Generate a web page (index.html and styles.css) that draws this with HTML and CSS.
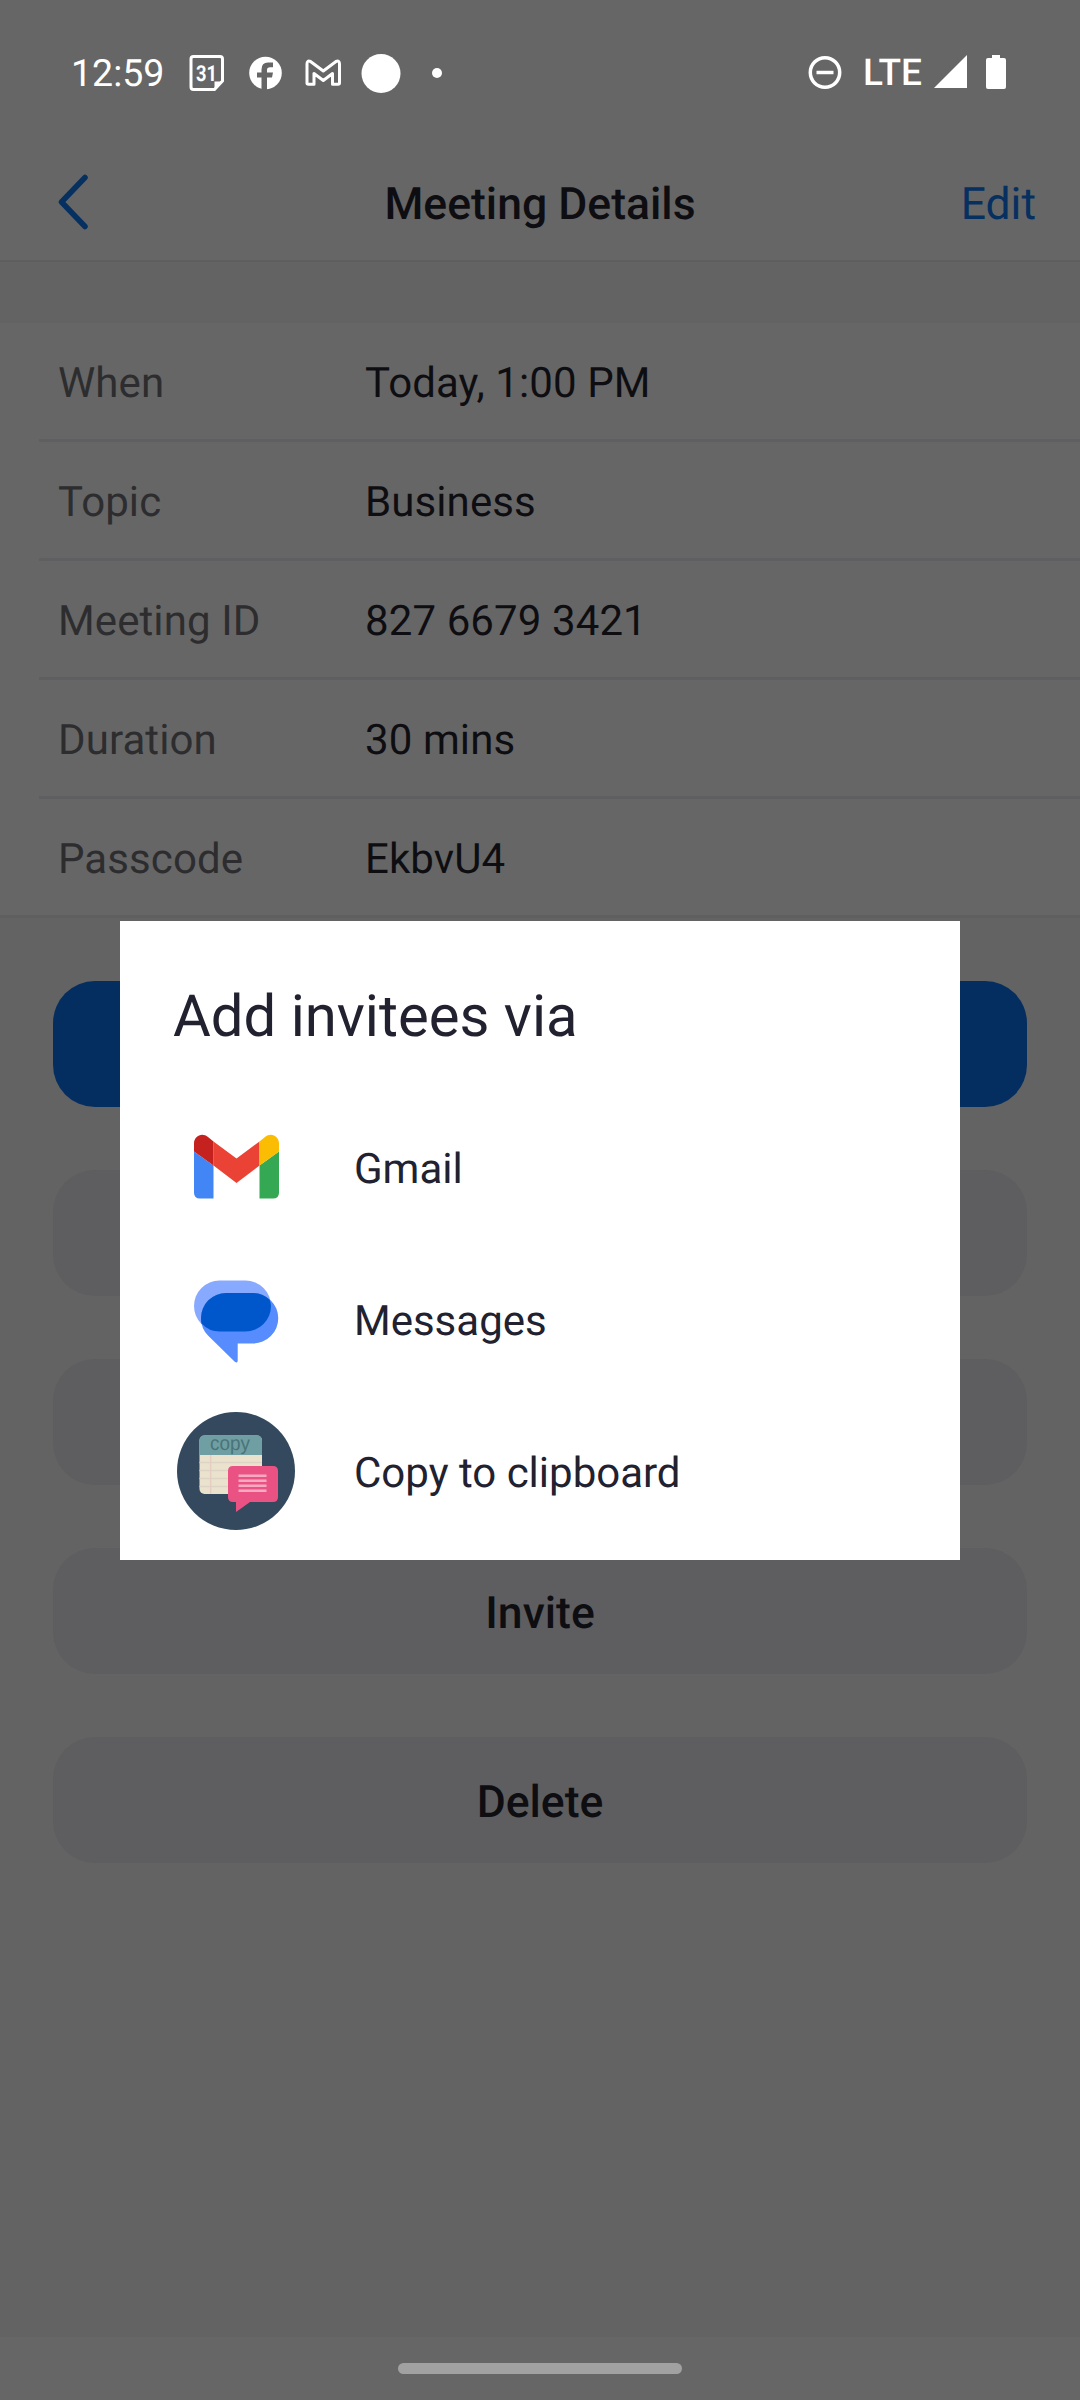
FILE: index.html
```html
<!DOCTYPE html>
<html lang="en">
<head>
<meta charset="utf-8">
<title>Meeting Details</title>
<link rel="stylesheet" href="styles.css">
</head>
<body>
<div class="screen">
  <div class="status-bar">
    <span class="clock">12:59</span>
    <svg class="status-left" width="256" height="40" viewBox="0 0 256 40">
      <path d="M4.500 2.500H31Q33.500 2.500 33.500 5V27L25.500 35.500H4.500Q2 35.500 2 33V5Q2 2.500 4.500 2.500Z" fill="none" stroke="#fff" stroke-width="3"/>
      <path d="M25.500 35V27.500H34Z" fill="#fff"/>
      <text class="calendar-day" x="17.500" y="26.500" text-anchor="middle" textLength="21" lengthAdjust="spacingAndGlyphs">31</text>
      <circle cx="76.500" cy="19" r="16.300" fill="#fff"/>
      <path d="M72.500 36V23.500H68V18.500H72.500V15.500Q72.500 8.500 79 8.500H84V13.200H81Q78 13.200 78 16V18.500H84L83 23.500H78V36Z" fill="#666"/>
      <path d="M118 29V10Q118 6 121.500 7.500L134.300 17L147 7.500Q150.500 6 150.500 10V29Q150.500 30.300 149 30.300H143.500V19.500L134.300 26.500L125 19.500V30.300H119.500Q118 30.300 118 29Z" fill="none" stroke="#fff" stroke-width="3" stroke-linejoin="round"/>
      <circle cx="192" cy="19.500" r="19.500" fill="#fff"/>
      <circle cx="248" cy="19" r="5" fill="#fff"/>
    </svg>
    <div class="status-right">
      <svg width="34" height="34" viewBox="0 0 34 34"><circle cx="17" cy="17.500" r="14.700" fill="none" stroke="#fff" stroke-width="3.500"/><path d="M8.500 17.500H25.500" stroke="#fff" stroke-width="3.500"/></svg>
      <span class="network">LTE</span>
      <svg class="signal" width="33" height="34" viewBox="0 0 33 34"><path d="M0 33L33 0V33Z" fill="#fff"/></svg>
      <svg class="battery" width="20" height="34" viewBox="0 0 20 34"><path d="M6 0H14V3H18Q20 3 20 5V32Q20 34 18 34H2Q0 34 0 32V5Q0 3 2 3H6Z" fill="#fff"/></svg>
    </div>
  </div>
  <header class="header">
    <svg class="back" width="32" height="56" viewBox="0 0 32 56"><path d="M28 3.500L4.500 28L28 52.500" fill="none" stroke="#053060" stroke-width="5.500" stroke-linecap="round" stroke-linejoin="round"/></svg>
    <h1 class="title">Meeting Details</h1>
    <span class="edit">Edit</span>
  </header>
  <dl class="details">
    <div class="row"><dt>When</dt><dd>Today, 1:00 PM</dd></div>
    <div class="row"><dt>Topic</dt><dd>Business</dd></div>
    <div class="row"><dt>Meeting ID</dt><dd>827 6679 3421</dd></div>
    <div class="row"><dt>Duration</dt><dd>30 mins</dd></div>
    <div class="row"><dt>Passcode</dt><dd>EkbvU4</dd></div>
  </dl>
  <div class="actions">
    <div class="button primary"></div>
    <div class="button"></div>
    <div class="button"></div>
    <div class="button">Invite</div>
    <div class="button">Delete</div>
  </div>
  <div class="nav-bar"><div class="handle"></div></div>

  <div class="dialog">
    <h2 class="dialog-title">Add invitees via</h2>
    <div class="option">
      <svg class="option-icon" width="120" height="120" viewBox="0 -3.500 120 120">
        <path d="M18 41L37.500 55V88H24Q18 88 18 82Z" fill="#4285f4"/>
        <path d="M83.500 55L103 41V82Q103 88 97 88H83.500Z" fill="#34a853"/>
        <path d="M37.500 31L60.500 48L83.500 31V55L60.500 72.500L37.500 55Z" fill="#ea4335"/>
        <path d="M18 41V33C18 25.500 26 21.500 32 26.500L37.500 31V55Z" fill="#c5221f"/>
        <path d="M103 41V33C103 25.500 95 21.500 89 26.500L83.500 31V55Z" fill="#fbbc04"/>
      </svg>
      <span>Gmail</span>
    </div>
    <div class="option">
      <svg class="option-icon" width="120" height="120" viewBox="0 -3.500 120 120">
        <rect x="18" y="18" width="77" height="51" rx="25.500" fill="#87a9ff"/>
        <path d="M50 30.500H77A25.200 25.200 0 0 1 77 81H61.700V98Q61.700 101.500 58.500 99L32 73Q25 66 25 55.500A25 25 0 0 1 50 30.500Z" fill="#578cff"/>
        <path d="M50 30.500H77Q86 30.500 93.500 37Q95 41 95 43.500A25.500 25.500 0 0 1 69.500 69H43.500Q33 69 25.500 61Q25 59 25 55.500A25 25 0 0 1 50 30.500Z" fill="#0057cc"/>
      </svg>
      <span>Messages</span>
    </div>
    <div class="option">
      <svg class="option-icon" width="120" height="120" viewBox="0 0 120 120">
        <circle cx="60" cy="60" r="59" fill="#34495e"/>
        <rect x="23.500" y="24.500" width="62.500" height="58.500" rx="5" fill="#ebe2cd"/>
        <path d="M23.500 44V29.500Q23.500 24.500 28.500 24.500H81Q86 24.500 86 29.500V44Z" fill="#6f9fa3"/>
        <path d="M23.500 51.500H86M23.500 59.500H86M23.500 67.500H86M23.500 75.500H86" stroke="#ded4c5" stroke-width="1.500"/>
        <path d="M34.700 44V83" stroke="#e6cdc4" stroke-width="1.500"/>
        <text class="copy-label" x="54" y="38.500" text-anchor="middle" textLength="40" lengthAdjust="spacingAndGlyphs">copy</text>
        <path d="M57 55H97Q102 55 102 60V86Q102 91 97 91H74L60 101V91H57Q52 91 52 86V60Q52 55 57 55Z" fill="#ea5284"/>
        <path d="M62.500 64.700H90.500M62.500 69.700H90.500M62.500 74.700H90.500M62.500 79.700H90.500" stroke="#f7a9c2" stroke-width="2.500"/>
      </svg>
      <span>Copy to clipboard</span>
    </div>
  </div>
</div>
</body>
</html>
```
FILE: styles.css
```css
* { box-sizing: border-box; }

body {
  margin: 0;
  font-family: Roboto, sans-serif;
  background: #646464;
  text-rendering: geometricPrecision;
}

.screen {
  position: relative;
  display: flex;
  flex-direction: column;
  width: 1080px;
  height: 2400px;
  overflow: hidden;
  background: #636363;
  color: #0e0e12;
  font-size: 42px;
}

.status-bar {
  display: flex;
  align-items: center;
  height: 144px;
  padding: 0 74px 0 71px;
  background: #666;
  color: #fff;
}

.clock { width: 118px; font-size: 37.500px; line-height: 44px; padding-top: 4px; }
.status-left { margin-top: 4px; }
.calendar-day { font: 700 22px Roboto, sans-serif; fill: #fff; }
.status-right { display: flex; align-items: center; margin-left: auto; }
.network { margin: 0 12px 0 21px; padding-top: 4px; font-size: 37px; font-weight: 500; line-height: 44px; }
.battery { margin-left: 19px; }

.header {
  display: grid;
  grid-template-columns: 1fr auto 1fr;
  align-items: center;
  height: 118px;
  padding: 0 44px 0 58px;
  background: #666;
  border-bottom: 2px solid #5e5e5e;
}

.back { margin-left: -1px; }
.title { margin: 0 14px 0 0; padding-top: 3px; font-size: 44.500px; line-height: 52px; font-weight: 500; }
.edit { justify-self: end; padding-top: 3px; color: #053060; font-size: 44.500px; line-height: 52px; }

.details {
  margin: 61px 0 0;
  background: #666;
  border-bottom: 3px solid #5f5f5f;
}

.row {
  display: flex;
  align-items: center;
  height: 119px;
  margin-left: 39px;
  padding: 4px 0 0 19px;
  border-bottom: 3px solid #5f5f61;
  letter-spacing: 0.1px;
}

.row:last-child { height: 116px; border-bottom: 0; }
.row dt { width: 307px; color: #2d2d2f; }
.row dd { margin: 0; }

.actions {
  display: flex;
  flex-direction: column;
  gap: 63px;
  padding: 63px 53px 0;
}

.button {
  display: flex;
  align-items: center;
  justify-content: center;
  height: 126px;
  padding-top: 3px;
  border-radius: 42px;
  background: #5e5e60;
  font-size: 44.500px;
  font-weight: 500;
}

.primary { background: #052e60; }

.nav-bar {
  display: flex;
  justify-content: center;
  height: 63px;
  margin-top: auto;
  padding-top: 26px;
  background: #666;
}

.handle { width: 284px; height: 11px; border-radius: 6px; background: #a1a1a1; }

.dialog {
  position: absolute;
  top: 921px;
  left: 120px;
  width: 840px;
  height: 639px;
  padding: 62px 53px 0;
  background: #fff;
  color: #212130;
}

.dialog-title { margin: 0 0 40px; font-size: 58px; line-height: 68px; font-weight: 400; }
.option { display: flex; align-items: center; gap: 58px; height: 152px; }
.option span { padding-top: 4px; }
.option-icon { margin-left: 3px; }
.copy-label { font: 20px "Liberation Sans", sans-serif; fill: #4a7478; }
```
